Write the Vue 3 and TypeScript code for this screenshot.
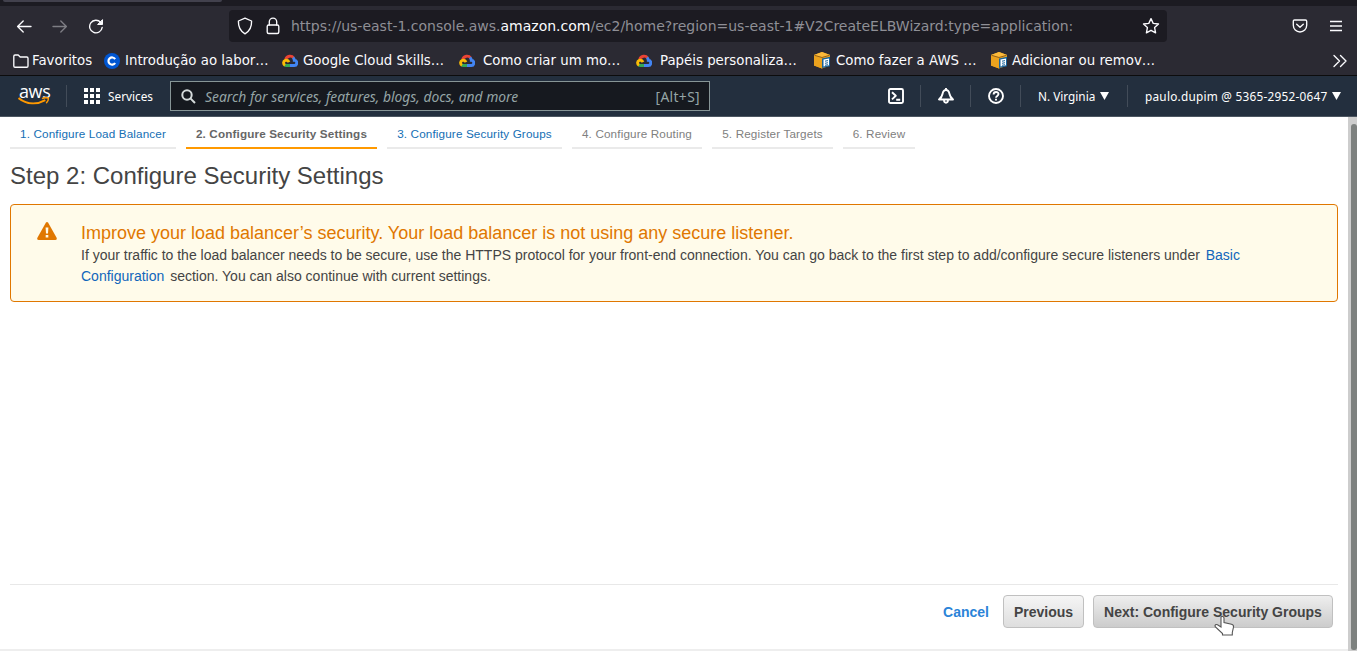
<script setup lang="ts">
interface Bookmark { label: string; icon: 'folder' | 'c' | 'cloud' | 'cube'; gap: number }
interface Step { label: string; state: 'link' | 'active' | 'pending' }

const bookmarks: Bookmark[] = [
  { label: 'Favoritos', icon: 'folder', gap: 3 },
  { label: 'Introdução ao labor…', icon: 'c', gap: 5 },
  { label: 'Google Cloud Skills…', icon: 'cloud', gap: 5 },
  { label: 'Como criar um mo…', icon: 'cloud', gap: 8 },
  { label: 'Papéis personaliza…', icon: 'cloud', gap: 8 },
  { label: 'Como fazer a AWS …', icon: 'cube', gap: 5 },
  { label: 'Adicionar ou remov…', icon: 'cube', gap: 4 },
]
const steps: Step[] = [
  { label: '1. Configure Load Balancer', state: 'link' },
  { label: '2. Configure Security Settings', state: 'active' },
  { label: '3. Configure Security Groups', state: 'link' },
  { label: '4. Configure Routing', state: 'pending' },
  { label: '5. Register Targets', state: 'pending' },
  { label: '6. Review', state: 'pending' },
]
</script>

<template>
  <div class="window">
    <div class="tabstrip"><div class="tab-edge"></div></div>
    <div class="toolbar">
      <svg class="tool back" width="16" height="16" viewBox="0 0 16 16"><path d="M15 8.500H1.600M7.200 3 1.600 8.500l5.600 5.500" /></svg>
      <svg class="tool forward" width="16" height="16" viewBox="0 0 16 16"><path d="M1 8.500h13.400M8.800 3l5.600 5.500-5.600 5.500" /></svg>
      <svg class="tool reload" width="16" height="16" viewBox="0 0 16 16"><path d="M12.700 4.400A6.300 6.300 0 1 0 14.200 9.400" /><path d="M14.500 2v4.500H10z" fill="#fbfbfe" stroke-width="1" /></svg>
      <div class="urlbar">
        <svg class="tool" width="16" height="18" viewBox="0 0 16 18"><path d="M8 1.200 14.600 4c.2 6-2 10.200-6.600 12.800C3.400 14.200 1.200 10 1.400 4z" /></svg>
        <svg class="tool lock" width="14" height="18" viewBox="0 0 14 18"><path d="M3.300 8V4.800a3.700 3.700 0 0 1 7.400 0V8" /><rect x="1.200" y="8" width="11.600" height="8.500" rx="1.500" /></svg>
        <div class="address">https://us-east-1.console.aws.<b>amazon.com</b>/ec2/home?region=us-east-1#V2CreateELBWizard:type=application:</div>
        <svg class="tool star" width="18" height="18" viewBox="0 0 18 18"><path d="m9 1.600 2.200 4.800 5.300.6-3.900 3.600 1 5.300L9 13.300l-4.600 2.600 1-5.300L1.500 7l5.300-.6z" /></svg>
      </div>
      <svg class="tool pocket" width="16" height="16" viewBox="0 0 16 16"><path d="M2.600 2h10.800c.8 0 1.300.5 1.300 1.300v4a6.700 6.700 0 0 1-13.400 0v-4C1.300 2.500 1.800 2 2.600 2zM4.700 6.200 8 9.300l3.300-3.100" /></svg>
      <svg class="tool menu" width="12" height="12" viewBox="0 0 12 12"><path d="M0 1.500h12M0 6h12M0 10.500h12" /></svg>
    </div>
    <div class="bookmarks">
      <div v-for="b in bookmarks" :key="b.label" class="bookmark" :style="{ gap: b.gap + 'px' }">
        <svg v-if="b.icon === 'folder'" class="tool" width="16" height="16" viewBox="0 0 16 16"><path d="M.8 13V3.200c0-.7.4-1.200 1.200-1.200h3.200l2 2h6.600c.8 0 1.200.5 1.200 1.200V13c0 .7-.4 1.200-1.200 1.200H2C1.200 14.200.8 13.700.8 13z" /></svg>
        <svg v-else-if="b.icon === 'c'" width="16" height="16" viewBox="0 0 16 16"><circle cx="8" cy="8" r="8" fill="#0056d2" /><path d="M11.100 6.100a3.600 3.600 0 1 0 0 3.900" fill="none" stroke="#fff" stroke-width="2.200" /></svg>
        <svg v-else-if="b.icon === 'cloud'" width="16" height="16" viewBox="0 0 16 16" fill="none" stroke-width="2.900"><path d="M3.700 6.200A4.600 4.600 0 0 1 11.700 5" stroke="#ea4335" /><path d="M11 4.600c.9.800 1.300 1.700 1.300 2.700a2.600 2.600 0 0 1-.3 5.200H8" stroke="#4285f4" /><path d="M8 12.500H4.500c-.8 0-1.400-.2-2-.7" stroke="#34a853" /><path d="M3 12.200C1 11 1 8.300 3.300 7.400c1.500-.5 3 .1 3.700 1.700" stroke="#fbbc05" /></svg>
        <svg v-else width="17" height="17" viewBox="0 0 17 17"><path d="m0 3 8-3 8 3v10.500l-8 3-8-3z" fill="#f2a81d" /><path d="m0 3 8-3 8 3-8 2.200z" fill="#fbb93a" /><path d="m0 3 8 2.200v11.300l-8-3z" fill="#eba21e" /><path d="M.5 3.300 8 5.500l7.500-2.200" stroke="#91601a" fill="none" /><path d="m8 6.400 8-1.700v9.500L8 16z" fill="#17639c" /><path d="m9.500 7.500 5.500-1.100v6.900L9.500 14.500z" fill="#fff" /><path d="m11 9.200 3-.6m-3 2.700 3-.6m-3 2.600 3-.6" stroke="#17639c" /></svg>
        <span>{{ b.label }}</span>
      </div>
      <svg class="tool overflow" width="14" height="14" viewBox="0 0 14 14"><path d="m1 1.500 5.500 5.500L1 12.500M7.500 1.500 13 7l-5.500 5.500" /></svg>
    </div>

    <header class="nav">
      <div class="logo">
        <span>aws</span>
        <svg width="32" height="9" viewBox="0 0 32 9"><path d="M.5 1C9 7.600 19 7.800 27.300 3.100" fill="none" stroke="#f90" stroke-width="2" /><path d="M24 1.600c2-.9 4.800-1 6.300-.5.300 1.600-.5 3.500-2.100 5" fill="none" stroke="#f90" stroke-width="1.500" /></svg>
      </div>
      <i class="divider"></i>
      <svg class="grid" width="16" height="16" viewBox="0 0 16 16" fill="#fff"><path d="M0 0h4v4H0zM6 0h4v4H6zM12 0h4v4h-4zM0 6h4v4H0zM6 6h4v4H6zM12 6h4v4h-4zM0 12h4v4H0zM6 12h4v4H6zM12 12h4v4h-4z" /></svg>
      <span class="services">Services</span>
      <div class="search">
        <svg width="15" height="15" viewBox="0 0 15 15" fill="none" stroke="#d5dbdb" stroke-width="2"><circle cx="6" cy="6" r="4.700" /><path d="m9.400 9.400 4.600 4.600" /></svg>
        <em>Search for services, features, blogs, docs, and more</em>
        <span>[Alt+S]</span>
      </div>
      <svg class="navicon shell" width="16" height="16" viewBox="0 0 16 16"><rect x="1" y="1" width="14" height="14" rx="1.500" /><path d="m4 4.200 3.800 3.600L4 11.400M8.200 11.700h4" /></svg>
      <i class="divider"></i>
      <svg class="navicon" width="16" height="16" viewBox="0 0 16 16"><path d="M8 0v2.500M8 2C5.600 2 4.900 3.800 4.500 6c-.4 2.200-1.400 3.800-3.500 5.500h14C12.900 9.800 11.900 8.200 11.500 6 11.100 3.800 10.400 2 8 2zM6 12.300c.2 3.200 3.800 3.200 4 0" /></svg>
      <i class="divider"></i>
      <svg class="navicon" width="16" height="16" viewBox="0 0 16 16"><circle cx="8" cy="8" r="7" /><path d="M5.600 6.400c0-3.200 4.900-3.100 4.900-.3C10.500 8 8 7.900 8 9.800M8 10.800v1.800" /></svg>
      <i class="divider"></i>
      <div class="region"><span>N. Virginia</span><svg width="9" height="8" viewBox="0 0 9 8"><path d="M0 0h9L4.500 8z" fill="#fff" /></svg></div>
      <i class="divider"></i>
      <div class="account"><span>paulo.dupim @ 5365-2952-0647</span><svg width="9" height="8" viewBox="0 0 9 8"><path d="M0 0h9L4.500 8z" fill="#fff" /></svg></div>
    </header>

    <div class="body">
      <main>
        <nav class="steps">
          <div v-for="s in steps" :key="s.label" :class="['step', s.state]"><span>{{ s.label }}</span></div>
        </nav>
        <h1>Step 2: Configure Security Settings</h1>
        <section class="alert">
          <svg width="20" height="18" viewBox="0 0 20 18"><path d="M8.800.8Q10-.8 11.200.8l8.300 14.700q1 2.300-1.300 2.500H1.800q-2.300-.2-1.300-2.500z" fill="#e07700" /><path d="M8.600 5.500h2.800L11 11.500H9zM8.700 13h2.600v2.500H8.700z" fill="#fffbea" /></svg>
          <div>
            <h2>Improve your load balancer’s security. Your load balancer is not using any secure listener.</h2>
            <p>
              <span class="line first">If your traffic to the load balancer needs to be secure, use the HTTPS protocol for your front-end connection. You can go back to the first step to add/configure secure listeners under <a>Basic</a></span>
              <span class="line second"><a>Configuration</a> section. You can also continue with current settings.</span>
            </p>
          </div>
        </section>
        <footer>
          <a class="cancel">Cancel</a>
          <button class="previous">Previous</button>
          <button class="next">Next: Configure Security Groups
            <svg class="pointer" width="21" height="22" viewBox="0 0 21 22"><path d="M7 2c1-1.200 3-.5 3 1v4.500l7.500 1.700c1.700.4 2.300 1.300 2 3l-1.200 5.300V20H8.500v-1.500L1.200 11.700C.5 10 2 9 3.500 9.700L7 12z" fill="#fff" stroke="#555" stroke-width="1.100" /></svg>
          </button>
        </footer>
      </main>
      <div class="scrollbar"><div class="thumb"></div></div>
    </div>
  </div>
</template>

<style>
body { margin: 0; overflow: hidden; }
</style>
<style scoped>
* { box-sizing: border-box; }
svg { display: block; flex: none; }
.window { width: 1357px; height: 651px; display: flex; flex-direction: column; overflow: hidden; background: #fff; font-family: "Liberation Sans", Arial, sans-serif; }
.tabstrip { height: 6px; background: #1c1b22; }
.tab-edge { width: 219px; height: 2px; margin-left: 3px; background: #42414d; border-radius: 0 0 3px 3px; }
.toolbar { height: 40px; background: #2b2a33; display: flex; align-items: center; padding-left: 16px; }
.tool { fill: none; stroke: #fbfbfe; stroke-width: 1.35; stroke-linejoin: round; stroke-linecap: round; }
.forward { margin-left: 20px; opacity: .4; }
.reload { margin-left: 20px; }
.urlbar { width: 938px; height: 32px; margin-left: 125px; border-radius: 4px; background: #1c1b22; display: flex; align-items: center; padding: 0 7px 0 8px; }
.lock { margin-left: 13px; }
.address { flex: 1; margin-left: 11px; font: 14px/18px "DejaVu Sans", sans-serif; color: #8f8f96; white-space: nowrap; }
.address b { font-weight: 400; color: #fbfbfe; }
.pocket { margin-left: 125px; }
.menu { margin-left: 22px; }
.bookmarks { height: 30px; background: #2b2a33; border-bottom: 1px solid #0c0c0d; display: grid; grid-template-columns: 91px 178px 177px 177px 178px 177px 319px auto; padding-left: 13px; align-items: center; }
.bookmark { height: 19px; display: flex; align-items: center; font: 13.33px/19px "DejaVu Sans", sans-serif; color: #fbfbfe; white-space: nowrap; }
.overflow { margin: 1px 0 0 23px; }
.nav { height: 41px; background: #232f3e; border-bottom: 1px solid #4c5661; display: flex; align-items: center; color: #fff; font: 11.8px "Noto Sans", sans-serif; white-space: nowrap; }
.logo { width: 32px; margin-left: 18px; display: flex; flex-direction: column; }
.logo span { font: 500 18px/15px "Open Sans", sans-serif; height: 13px; margin-top: -2px; margin-left: 1px; letter-spacing: -.4px; }
.divider { width: 1px; height: 22px; background: #424c59; flex: none; }
.logo + .divider { margin-left: 16px; }
.grid { margin-left: 17px; }
.services { width: 62px; margin-left: 8px; }
.search { width: 540px; height: 30px; border: 1px solid #879596; background: #16191f; display: flex; align-items: center; padding: 0 9px 0 10px; color: #95a5a6; font-size: 13.85px; }
.search span { letter-spacing: .35px; }
.search em { margin-left: 9px; flex: 1; }
.navicon { fill: none; stroke: #fff; stroke-width: 1.9; stroke-linejoin: round; margin-right: 16px; }
.navicon.shell { margin-left: 178px; }
.divider + .navicon { margin-left: 17px; }
.region { width: 106px; padding-left: 17px; display: flex; align-items: center; gap: 5px; }
.account { padding-left: 17px; display: flex; align-items: center; gap: 5px; }
.account span { letter-spacing: .24px; }
.body { flex: 1; display: flex; min-height: 0; }
main { width: 1348px; padding: 0 10px; display: flex; flex-direction: column; border-bottom: 2px solid #eee; }
.steps { display: grid; grid-template-columns: 166px 191px 175px 130px 121px 72px; gap: 10px; height: 32px; }
.step { border-bottom: 2px solid #eaeaea; text-align: center; font-size: 11.7px; letter-spacing: .14px; line-height: 34px; height: 32px; white-space: nowrap; color: #808080; }
.step.link { color: #146eb4; }
.step.active { color: #666; font-weight: 700; border-color: #f90; }
h1 { margin: 13px 0 0; font-size: 24px; line-height: 28px; height: 28px; font-weight: 400; color: #444; white-space: nowrap; }
.alert { margin-top: 14px; width: 1328px; height: 98px; border: 1px solid #e07700; border-radius: 4px; background: #fffbea; display: flex; padding: 17px 0 0 26px; gap: 24px; }
h2 { margin: 0; font-size: 18px; line-height: 22px; font-weight: 400; color: #e07700; white-space: nowrap; }
p { margin: 1px 0 0; color: #444; font-size: 14px; line-height: 21px; }
.line { display: block; white-space: nowrap; }
a { color: #1166bb; }
.first a, .second a { margin: 0 2px; }
.second a { margin-left: 0; }
footer { margin-top: auto; width: 1328px; height: 65px; border-top: 1px solid #e8e8e8; display: flex; justify-content: flex-end; padding: 10px 5px 0 0; }
.cancel { color: #2b84d8; font-weight: 700; font-size: 14px; line-height: 34px; margin-right: 14px; }
button { height: 33px; padding: 0; border: 1px solid #c0c0c0; border-radius: 4px; background: linear-gradient(#f5f5f5, #dedede); color: #444; font: 700 14px "Liberation Sans", Arial, sans-serif; white-space: nowrap; }
.previous { width: 81px; margin-right: 9px; }
.next { width: 240px; position: relative; background: linear-gradient(#eee, #ccc); }
.pointer { position: absolute; left: 120px; top: 19px; }
.scrollbar { width: 9px; background: #cdcdcd; padding: 7px 0 0 3px; }
.thumb { height: 526px; width: 6px; border-radius: 4px 4px 3px 3px; background: #7d817f; }
</style>
